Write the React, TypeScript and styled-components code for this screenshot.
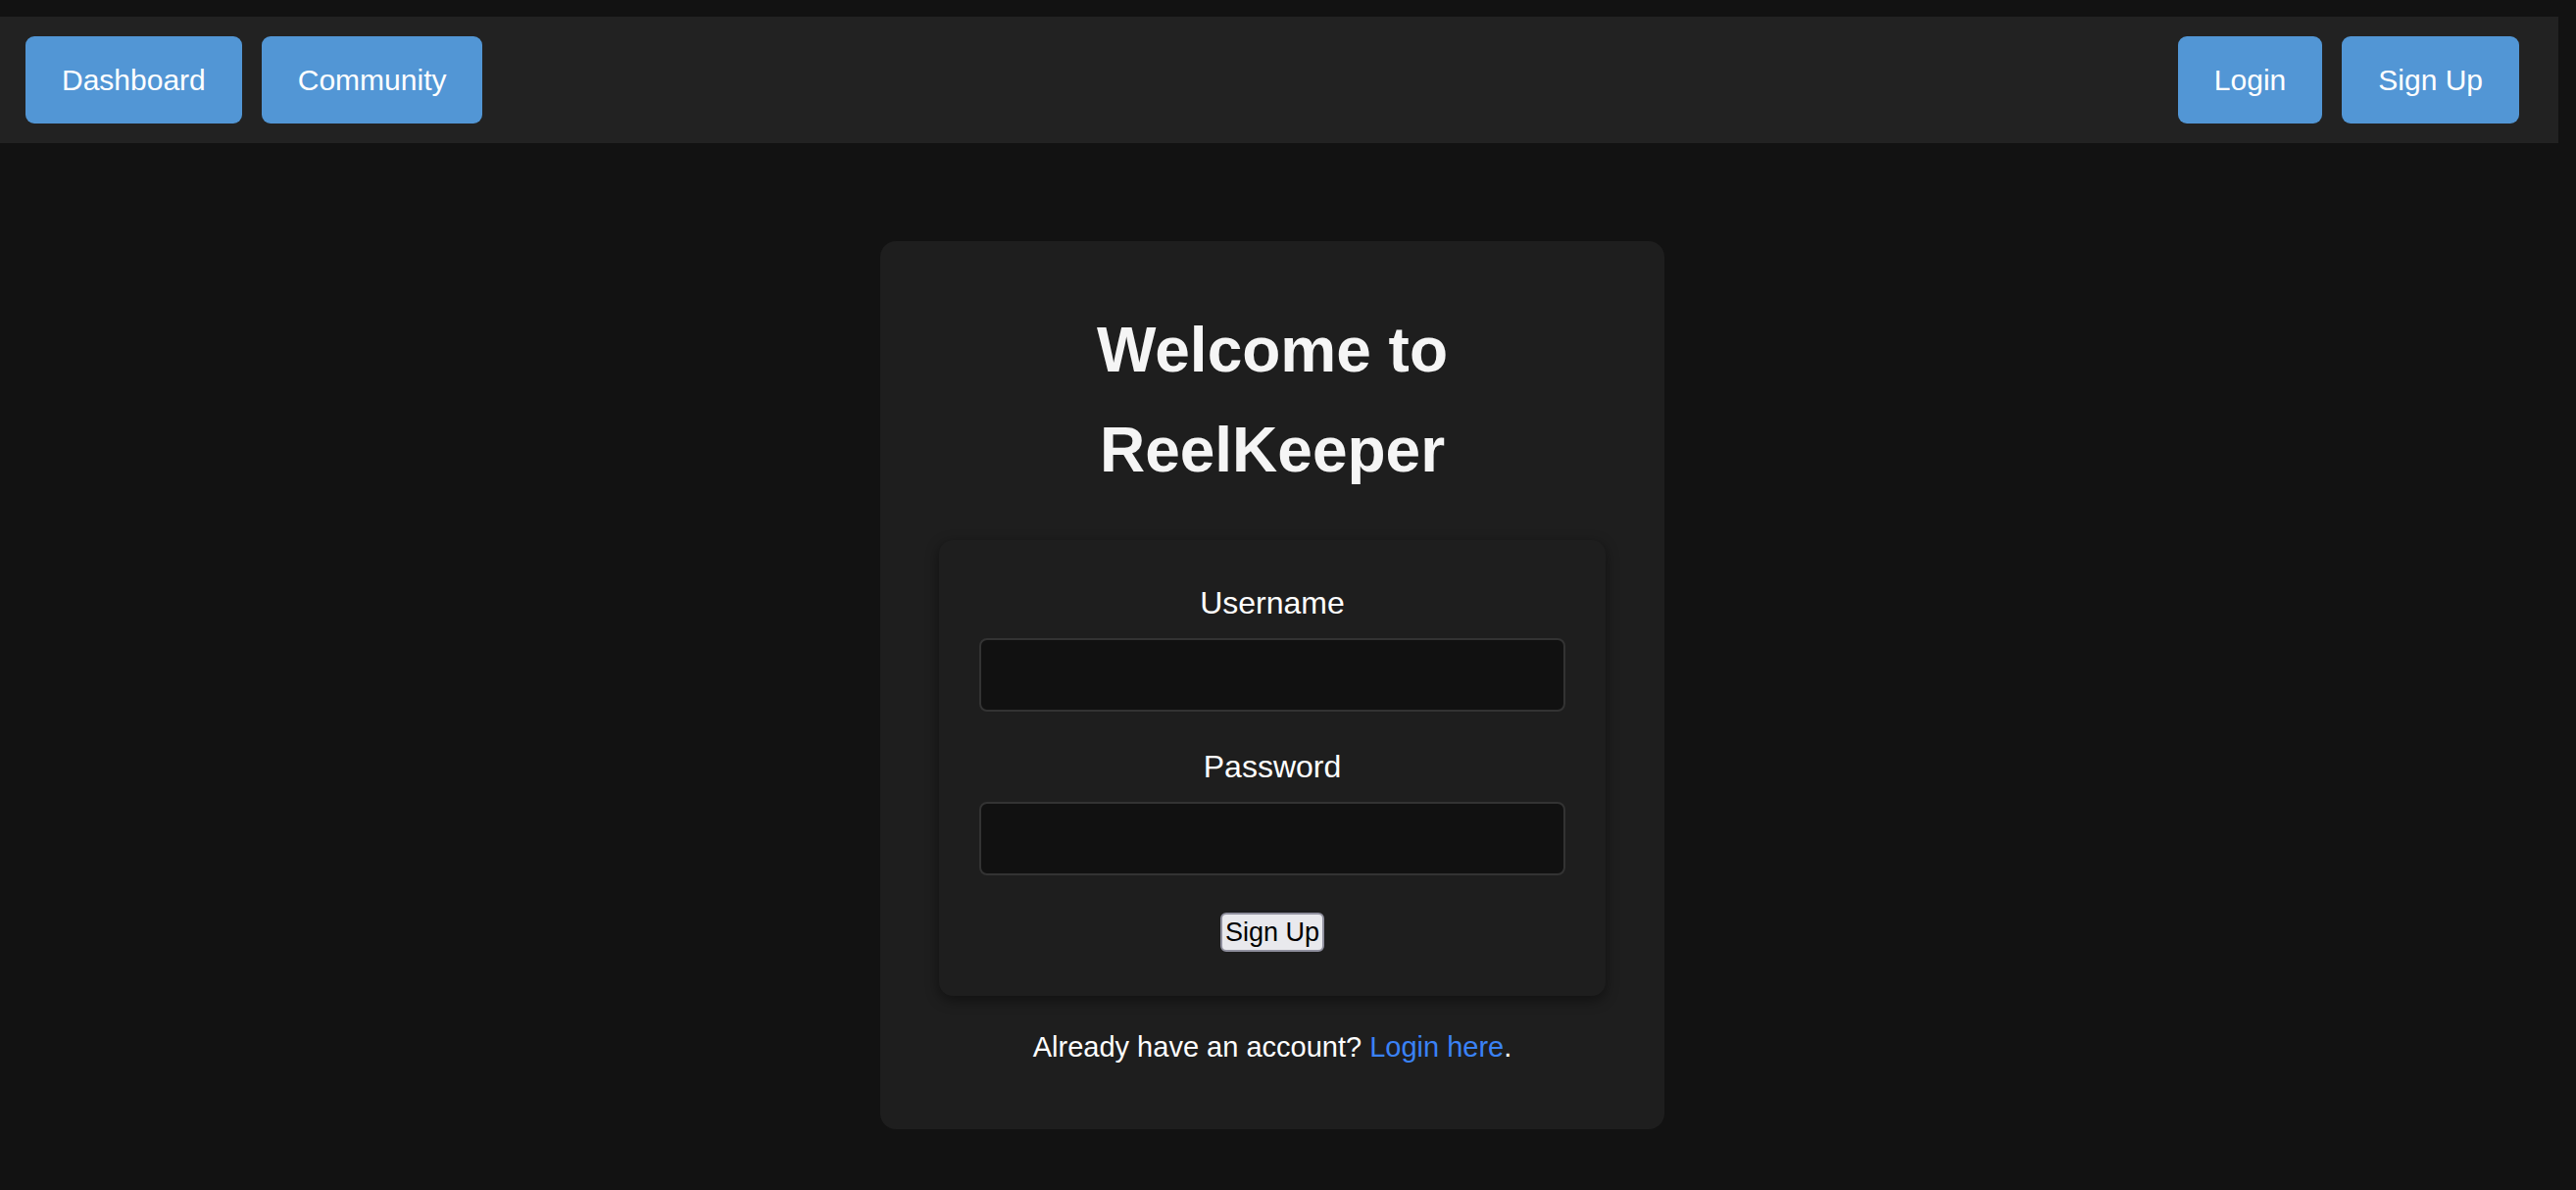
import React from "react";
import styled, { createGlobalStyle } from "styled-components";

const GlobalStyle = createGlobalStyle`
    html, body {
        margin: 0;
        padding: 0;
        background-color: #121212;
        color: #ffffff;
        font-family: "Liberation Sans", Arial, sans-serif;
    }
`
const PageWrapper = styled.div`
    width: 100%;
    min-height: 1214px;
    padding-top: 17px;
    box-sizing: border-box;
`
const NavBar = styled.nav`
    display: flex;
    align-items: center;
    justify-content: space-between;
    width: 2610px;
    box-sizing: border-box;
    padding: 20px 40px 20px 26px;
    background-color: #222222;
`
const NavGroup = styled.div`
    display: flex;
    gap: 20px;
`
const NavButton = styled.button`
    height: 89px;
    padding: 0 37px;
    border: none;
    border-radius: 9px;
    background-color: #5296d5;
    color: #ffffff;
    font-family: "Liberation Sans", Arial, sans-serif;
    font-size: 30px;
    cursor: pointer;
`
const Main = styled.main`
    display: flex;
    justify-content: center;
    padding: 100px 32px 0 0;
`
const Card = styled.div`
    width: 800px;
    box-sizing: border-box;
    padding: 60px;
    background-color: #1e1e1e;
    border-radius: 16px;
    text-align: center;
`
const Title = styled.h1`
    margin: 0 0 41px 0;
    font-size: 64px;
    line-height: 102px;
    font-weight: 700;
    color: #f5f5f5;
`
const Form = styled.form`
    display: flex;
    flex-direction: column;
    align-items: center;
    padding: 40px 41px 45px 41px;
    background-color: #1e1e1e;
    border-radius: 14px;
    box-shadow: 0 4px 14px rgba(0, 0, 0, 0.45);
`
const Label = styled.label`
    display: block;
    font-size: 32px;
    line-height: 48px;
    margin-bottom: 12px;
`
const Input = styled.input<{ $last?: boolean }>`
    width: 100%;
    height: 75px;
    box-sizing: border-box;
    margin-bottom: ${p => (p.$last ? "38px" : "32px")};
    background-color: #111111;
    border: 2px solid #333333;
    border-radius: 8px;
    color: #ffffff;
    font-size: 28px;
    padding: 0 16px;
`
const SubmitButton = styled.button`
    height: 40px;
    padding: 0 3px;
    background-color: #e9e9ed;
    border: 2px solid #8f8f9d;
    border-radius: 6px;
    color: #000000;
    font-family: "Liberation Sans", Arial, sans-serif;
    font-size: 27px;
    line-height: 34px;
`
const Footer = styled.p`
    margin: 28px 0 0 0;
    font-size: 29px;
    line-height: 48px;
`
const Link = styled.a`
    color: #3a82f6;
    text-decoration: none;
`

const App = () => {
    return(
    <PageWrapper>
        <GlobalStyle/>
        <NavBar>
            <NavGroup>
                <NavButton>Dashboard</NavButton>
                <NavButton>Community</NavButton>
            </NavGroup>
            <NavGroup>
                <NavButton>Login</NavButton>
                <NavButton>Sign Up</NavButton>
            </NavGroup>
        </NavBar>
        <Main>
            <Card>
                <Title>Welcome to ReelKeeper</Title>
                <Form onSubmit={e => e.preventDefault()}>
                    <Label htmlFor="username">Username</Label>
                    <Input id="username" type="text"/>
                    <Label htmlFor="password">Password</Label>
                    <Input id="password" type="password" $last/>
                    <SubmitButton type="submit">Sign Up</SubmitButton>
                </Form>
                <Footer>
                    Already have an account? <Link href="#">Login here</Link>.
                </Footer>
            </Card>
        </Main>
    </PageWrapper>
    )
}

export default App
